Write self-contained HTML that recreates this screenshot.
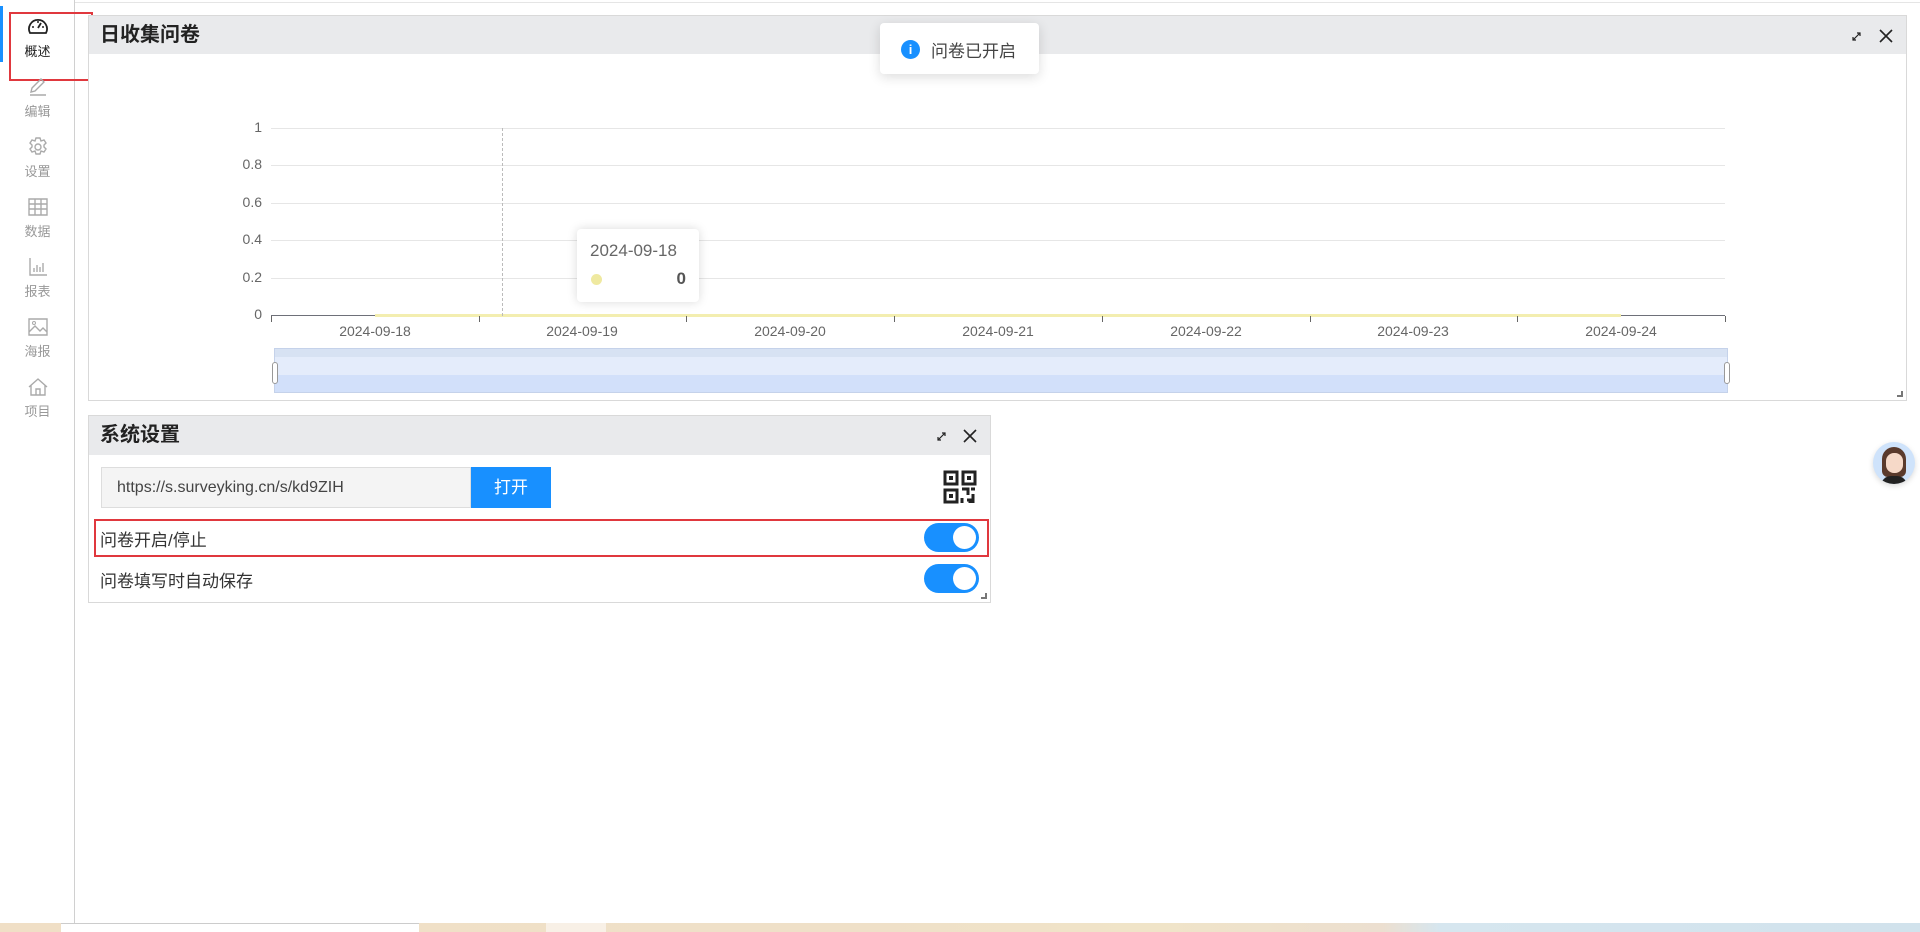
<!DOCTYPE html>
<html><head><meta charset="utf-8"><style>
*{box-sizing:border-box;margin:0;padding:0}
body{width:1920px;height:932px;position:relative;background:#fff;font-family:"Liberation Sans","Noto Sans CJK SC",sans-serif;overflow:hidden;color:#333}
.abs{position:absolute}
.side{left:0;top:0;width:75px;height:923px;border-right:1px solid #d0d0d0}
.nav{position:absolute;left:0;width:75px;text-align:center;font-size:13px;color:#999}
.nav svg{display:block;margin:0 auto 4px}
.panel{border:1px solid #d9d9d9;background:#fff}
.hd{position:absolute;left:0;right:0;top:0;background:#e9eaec;font-weight:bold;font-size:20px;color:#222;padding-left:11px}
.ylab{position:absolute;width:40px;text-align:right;left:222px;font-size:14px;color:#666}
.grid{position:absolute;left:271px;width:1454px;height:1px;background:#e6e6e6}
.xlab{position:absolute;font-size:14px;color:#666;width:120px;text-align:center}
.tick{position:absolute;top:316px;width:1px;height:6px;background:#666}
.sw{position:absolute;width:55px;height:29px;border-radius:15px;background:#1890ff}
.sw:after{content:"";position:absolute;right:3px;top:3px;width:23px;height:23px;border-radius:50%;background:#fff}
</style></head><body>
<div class="abs" style="left:75px;top:2px;right:0;height:1px;background:#e5e5e5"></div>
<div class="abs side"></div>
<div class="abs" style="left:0;top:6px;width:3px;height:56px;background:#1890ff"></div>
<div class="abs" style="left:9px;top:12px;width:84px;height:69px;border:2px solid #e0383e"></div>

<div class="nav" style="top:17px;color:#222"><svg width="22" height="20" viewBox="0 0 22 20"><path d="M3 16 A9 9 0 1 1 19 16 Z" fill="none" stroke="#222" stroke-width="1.8"/><path d="M11 11 L14 6" stroke="#222" stroke-width="1.8"/><circle cx="6" cy="10" r="1" fill="#222"/><circle cx="11" cy="5" r="1" fill="#222"/><circle cx="16" cy="10" r="1" fill="#222"/></svg>概述</div>
<div class="nav" style="top:77px"><svg width="22" height="20" viewBox="0 0 22 20"><path d="M4 15 L5 11 L14 2 L17 5 L8 14 Z M3 18 H19" fill="none" stroke="#aaa" stroke-width="1.4"/></svg>编辑</div>
<div class="nav" style="top:137px"><svg width="22" height="20" viewBox="0 0 22 20"><path d="M9 1h4l1 3 3-1 2 3-2 2 0 2 2 2-2 3-3-1-1 3h-4l-1-3-3 1-2-3 2-2 0-2-2-2 2-3 3 1z" fill="none" stroke="#aaa" stroke-width="1.4"/><circle cx="11" cy="10" r="3" fill="none" stroke="#aaa" stroke-width="1.4"/></svg>设置</div>
<div class="nav" style="top:197px"><svg width="22" height="20" viewBox="0 0 22 20"><path d="M2 2h18v16H2zM2 7h18M2 12h18M8 2v16M14 2v16" fill="none" stroke="#aaa" stroke-width="1.4"/></svg>数据</div>
<div class="nav" style="top:257px"><svg width="22" height="20" viewBox="0 0 22 20"><path d="M3 1v17h17M7 15v-4M10 15V8M13 15v-5M16 15V6" fill="none" stroke="#aaa" stroke-width="1.4"/></svg>报表</div>
<div class="nav" style="top:317px"><svg width="22" height="20" viewBox="0 0 22 20"><path d="M2 2h18v16H2zM2 15l6-6 5 5 3-3 4 4" fill="none" stroke="#aaa" stroke-width="1.4"/><circle cx="7" cy="6" r="1.5" fill="none" stroke="#aaa"/></svg>海报</div>
<div class="nav" style="top:377px"><svg width="22" height="20" viewBox="0 0 22 20"><path d="M2 10L11 2l9 8M4 8v10h14V8M9 18v-6h4v6" fill="none" stroke="#aaa" stroke-width="1.4"/></svg>项目</div>

<div class="abs panel" style="left:88px;top:15px;width:1819px;height:386px">
 <div class="hd" style="height:38px;line-height:38px">日收集问卷</div>
 <svg class="abs" style="right:44px;top:15px" width="11" height="11" viewBox="0 0 11 11"><path d="M2 9L9 2M6 2h3v3M2 6v3h3" fill="none" stroke="#222" stroke-width="1.2"/></svg>
 <svg class="abs" style="right:12px;top:12px" width="16" height="16" viewBox="0 0 16 16"><path d="M2 2L14 14M14 2L2 14" stroke="#222" stroke-width="1.6"/></svg>
 <div class="abs" style="right:3px;bottom:3px;width:6px;height:6px;border-right:2px solid #777;border-bottom:2px solid #777"></div>
</div>
<div class="ylab" style="top:119px">1</div>
<div class="ylab" style="top:156px">0.8</div>
<div class="ylab" style="top:194px">0.6</div>
<div class="ylab" style="top:231px">0.4</div>
<div class="ylab" style="top:269px">0.2</div>
<div class="ylab" style="top:306px">0</div>
<div class="grid" style="top:128px"></div>
<div class="grid" style="top:165px"></div>
<div class="grid" style="top:203px"></div>
<div class="grid" style="top:240px"></div>
<div class="grid" style="top:278px"></div>
<div class="grid" style="top:315px;background:#6e7079"></div>
<div class="abs" style="left:375px;top:314px;width:1246px;height:3px;background:#f3eeb0"></div>
<div class="abs" style="left:502px;top:128px;height:188px;border-left:1px dashed #bbb"></div>
<div class="tick" style="left:271px"></div><div class="tick" style="left:479px"></div><div class="tick" style="left:686px"></div><div class="tick" style="left:894px"></div><div class="tick" style="left:1102px"></div><div class="tick" style="left:1310px"></div><div class="tick" style="left:1517px"></div><div class="tick" style="left:1725px"></div>
<div class="xlab" style="left:315px;top:323px">2024-09-18</div>
<div class="xlab" style="left:522px;top:323px">2024-09-19</div>
<div class="xlab" style="left:730px;top:323px">2024-09-20</div>
<div class="xlab" style="left:938px;top:323px">2024-09-21</div>
<div class="xlab" style="left:1146px;top:323px">2024-09-22</div>
<div class="xlab" style="left:1353px;top:323px">2024-09-23</div>
<div class="xlab" style="left:1561px;top:323px">2024-09-24</div>
<div class="abs" style="left:274px;top:348px;width:1454px;height:45px;background:#d7e2f3;border:1px solid #c5d2ea"></div>
<div class="abs" style="left:275px;top:357px;width:1452px;height:18px;background:#e4ecfb"></div>
<div class="abs" style="left:275px;top:375px;width:1452px;height:17px;background:#d2e0fa"></div>
<div class="abs" style="left:272px;top:362px;width:6px;height:22px;background:#fff;border:1px solid #999;border-radius:3px"></div>
<div class="abs" style="left:1724px;top:362px;width:6px;height:22px;background:#fff;border:1px solid #999;border-radius:3px"></div>
<div class="abs" style="left:577px;top:229px;width:122px;height:73px;background:#fff;border-radius:4px;box-shadow:0 0 10px rgba(0,0,0,.15)">
 <div class="abs" style="left:13px;top:12px;font-size:17px;color:#666">2024-09-18</div>
 <div class="abs" style="left:14px;top:45px;width:11px;height:11px;border-radius:50%;background:#efe9a0"></div>
 <div class="abs" style="right:13px;top:40px;font-size:17px;font-weight:bold;color:#555">0</div>
</div>
<div class="abs" style="left:880px;top:23px;width:159px;height:51px;background:#fff;border-radius:4px;box-shadow:0 3px 12px rgba(0,0,0,.14)">
 <div class="abs" style="left:21px;top:17px;width:19px;height:19px;border-radius:50%;background:#1890ff;color:#fff;font-size:13px;font-weight:bold;text-align:center;line-height:19px">i</div>
 <div class="abs" style="left:51px;top:14px;font-size:17px;color:#444">问卷已开启</div>
</div>

<div class="abs panel" style="left:88px;top:415px;width:903px;height:188px">
 <div class="hd" style="height:39px;line-height:39px">系统设置</div>
 <svg class="abs" style="right:43px;top:15px" width="11" height="11" viewBox="0 0 11 11"><path d="M2 9L9 2M6 2h3v3M2 6v3h3" fill="none" stroke="#222" stroke-width="1.2"/></svg>
 <svg class="abs" style="right:12px;top:12px" width="16" height="16" viewBox="0 0 16 16"><path d="M2 2L14 14M14 2L2 14" stroke="#222" stroke-width="1.6"/></svg>
 <div class="abs" style="left:12px;top:51px;width:370px;height:41px;background:#f4f4f4;border:1px solid #ddd;font-size:16px;line-height:39px;padding-left:15px;color:#444">https://s.surveyking.cn/s/kd9ZIH</div>
 <div class="abs" style="left:382px;top:51px;width:80px;height:41px;background:#1890ff;color:#fff;font-size:17px;line-height:41px;text-align:center">打开</div>
 <svg class="abs" style="left:854px;top:54px" width="34" height="34" viewBox="0 0 34 34"><g fill="none" stroke="#222" stroke-width="3"><rect x="2" y="2" width="12" height="12"/><rect x="20" y="2" width="12" height="12"/><rect x="2" y="20" width="12" height="12"/></g><rect x="6" y="6" width="4" height="4" fill="#222"/><rect x="24" y="6" width="4" height="4" fill="#222"/><rect x="6" y="24" width="4" height="4" fill="#222"/><path d="M19 19h6v6M28 19h4M19 28v5M24 30h3v3M30 24v9" stroke="#222" stroke-width="3" fill="none"/></svg>
 <div class="abs" style="left:5px;top:103px;width:895px;height:38px;border:2px solid #e0383e"></div>
 <div class="abs" style="left:11px;top:110px;font-size:17px;color:#333">问卷开启/停止</div>
 <div class="sw" style="left:835px;top:107px"></div>
 <div class="abs" style="left:11px;top:151px;font-size:17px;color:#333">问卷填写时自动保存</div>
 <div class="sw" style="left:835px;top:148px"></div>
 <div class="abs" style="right:3px;bottom:3px;width:6px;height:6px;border-right:2px solid #777;border-bottom:2px solid #777"></div>
</div>

<div class="abs" style="left:1873px;top:442px;width:42px;height:42px;border-radius:50%;background:#cfe3fb;overflow:hidden;box-shadow:0 2px 6px rgba(0,0,0,.15)">
 <div class="abs" style="left:9px;top:5px;width:24px;height:30px;border-radius:12px 12px 6px 6px;background:#5a3a2c"></div>
 <div class="abs" style="left:13px;top:11px;width:17px;height:20px;border-radius:8px;background:#f6d9c8"></div>
 <div class="abs" style="left:8px;top:34px;width:26px;height:12px;border-radius:10px 10px 0 0;background:#222"></div>
</div>

<div class="abs" style="left:0;top:923px;width:1920px;height:9px;background:linear-gradient(90deg,#f0dfc6 0%,#efe0c8 45%,#f0e4c8 60%,#ecdfd0 72%,#d6e6ef 75%,#d1e2ec 100%)"></div>
<div class="abs" style="left:61px;top:923px;width:358px;height:9px;background:#fff;border-top:1px solid #ccc"></div>
<div class="abs" style="left:546px;top:923px;width:60px;height:9px;background:#f8f0e6"></div>
</body></html>
